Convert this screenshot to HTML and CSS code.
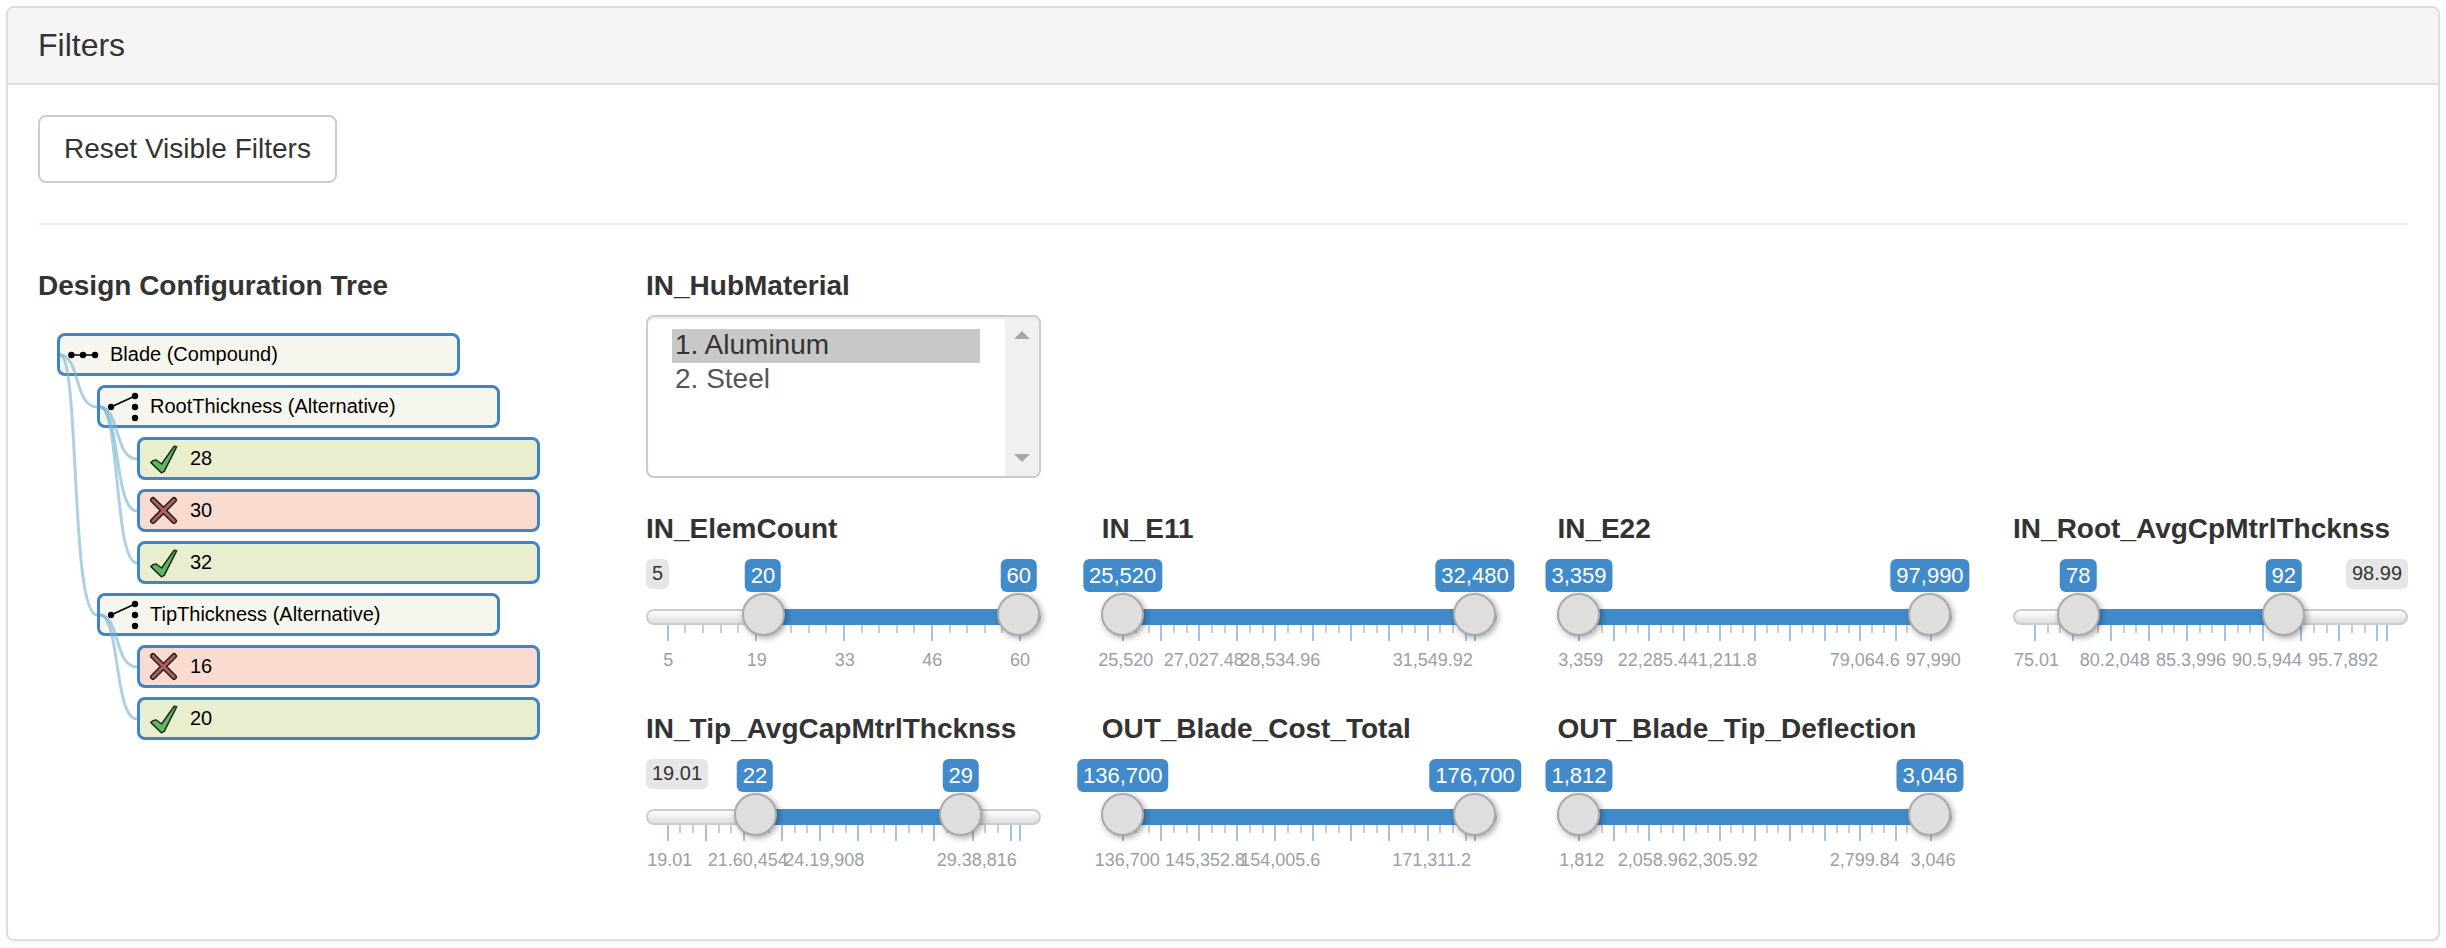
FILE: index.html
```html
<!DOCTYPE html>
<html>
<head>
    <title>Filters</title>
    <link rel="stylesheet" href="styles.css">
</head>
<body>

    <div class="panel">
        <div class="panel-heading">
            <h3 class="panel-title">Filters</h3>
        </div>
        <div class="panel-body">
            <button class="btn-reset">Reset Visible Filters</button>
            <hr class="divider">

            <div class="filters-row">
                <div class="tree-col">
                    <h4 class="filter-title">Design Configuration Tree</h4>
                    <div class="tree">
                        <div class="node">
                            <svg class="node-icon" viewBox="0 0 32 32"><path class="icon-line" d="M3 16H27"/><circle cx="3.4" cy="16" r="3.2"/><circle cx="15" cy="16" r="3.2"/><circle cx="27" cy="16" r="3.2"/></svg>
                            <span>Blade (Compound)</span>
                        </div>
                        <div class="node level-1">
                            <svg class="node-icon" viewBox="0 0 32 32"><path class="icon-line" d="M3 16L27 5"/><circle cx="3" cy="16" r="3.2"/><circle cx="27" cy="5" r="3.2"/><circle cx="27" cy="16" r="3.2"/><circle cx="27" cy="27" r="3.2"/></svg>
                            <span>RootThickness (Alternative)</span>
                        </div>
                        <div class="node level-2 node-ok">
                            <svg class="node-icon" viewBox="0 0 32 32"><path class="icon-check" d="M2.7 19.4Q5 16.8 8.3 17L13.6 21L26.2 3.2L28.6 3.8L16.2 28.4L13.4 29.8Z"/></svg>
                            <span>28</span>
                        </div>
                        <div class="node level-2 node-no">
                            <svg class="node-icon" viewBox="0 0 32 32"><path class="icon-x-out" d="M5 5L26 26M26 5L5 26"/><path class="icon-x-in" d="M5 5L26 26M26 5L5 26"/></svg>
                            <span>30</span>
                        </div>
                        <div class="node level-2 node-ok">
                            <svg class="node-icon" viewBox="0 0 32 32"><path class="icon-check" d="M2.7 19.4Q5 16.8 8.3 17L13.6 21L26.2 3.2L28.6 3.8L16.2 28.4L13.4 29.8Z"/></svg>
                            <span>32</span>
                        </div>
                        <div class="node level-1">
                            <svg class="node-icon" viewBox="0 0 32 32"><path class="icon-line" d="M3 16L27 5"/><circle cx="3" cy="16" r="3.2"/><circle cx="27" cy="5" r="3.2"/><circle cx="27" cy="16" r="3.2"/><circle cx="27" cy="27" r="3.2"/></svg>
                            <span>TipThickness (Alternative)</span>
                        </div>
                        <div class="node level-2 node-no">
                            <svg class="node-icon" viewBox="0 0 32 32"><path class="icon-x-out" d="M5 5L26 26M26 5L5 26"/><path class="icon-x-in" d="M5 5L26 26M26 5L5 26"/></svg>
                            <span>16</span>
                        </div>
                        <div class="node level-2 node-ok">
                            <svg class="node-icon" viewBox="0 0 32 32"><path class="icon-check" d="M2.7 19.4Q5 16.8 8.3 17L13.6 21L26.2 3.2L28.6 3.8L16.2 28.4L13.4 29.8Z"/></svg>
                            <span>20</span>
                        </div>

                        <svg class="links" viewBox="38 333 140 420">
                            <path d="M60 355C80 355 74 407 97 407"/>
                            <path d="M60 355C80 355 70 615 97 615"/>
                            <path d="M100 407C120 407 114 459 137 459"/>
                            <path d="M100 407C120 407 114 511 137 511"/>
                            <path d="M100 407C120 407 114 563 137 563"/>
                            <path d="M100 615C120 615 114 667 137 667"/>
                            <path d="M100 615C120 615 114 719 137 719"/>
                        </svg>
                    </div>
                </div>

                <div class="filters-col">
                    <h4 class="filter-title">IN_HubMaterial</h4>
                    <div class="listbox">
                        <div class="listbox-options">
                            <div class="option option-selected">1. Aluminum</div>
                            <div class="option">2. Steel</div>
                        </div>
                        <div class="scrollbar">
                            <span class="arrow-up"></span>
                            <span class="arrow-down"></span>
                        </div>
                    </div>
                    <div class="sliders" id="sliders"></div>
                </div>
            </div>
        </div>
    </div>

    <script src="sliders.js"></script>
</body>
</html>
```

FILE: styles.css
```css
* {
    box-sizing: border-box;
}

body {
    font-family: "Liberation Sans", Arial, sans-serif;
    color: #333333;
    background-color: #ffffff;
    margin: 0;
    padding: 6px;
}

.panel {
    border: 2px solid #dddddd;
    border-radius: 8px;
    box-shadow: 0 2px 4px rgba(0, 0, 0, 0.05);
}

.panel-heading {
    background-color: #f5f5f5;
    border-bottom: 2px solid #dddddd;
    border-radius: 6px 6px 0 0;
    padding: 20px 30px;
}

.panel-title {
    margin: 0;
    font-size: 32px;
    font-weight: normal;
    line-height: 35px;
}

.panel-body {
    padding: 30px 30px 56px;
}

.btn-reset {
    display: block;
    height: 68px;
    padding: 0 24px;
    font-family: inherit;
    font-size: 28px;
    color: #333333;
    background-color: #ffffff;
    border: 2px solid #cccccc;
    border-radius: 8px;
}

.divider {
    height: 2px;
    margin: 40px 0 45px;
    border: none;
    background-color: #eeeeee;
}

.filters-row {
    display: flex;
}

.tree-col {
    width: 608px;
    flex: none;
}

.filters-col {
    flex: 1;
}

.filter-title {
    margin: 0;
    font-size: 28px;
    font-weight: bold;
    line-height: 31px;
    white-space: nowrap;
}

/* tree */
.tree {
    position: relative;
    margin: 32px 0 0 19px;
}

.node {
    display: flex;
    align-items: center;
    width: 403px;
    height: 43px;
    margin-bottom: 9px;
    padding-left: 8px;
    font-size: 20px;
    color: #000000;
    background-color: #f7f6ee;
    border: 3px solid #3d85c6;
    border-radius: 8px;
}

.level-1 {
    margin-left: 40px;
}

.level-2 {
    margin-left: 80px;
}

.node-ok {
    background-color: #e9eecf;
}

.node-no {
    background-color: #f9dbd0;
}

.node-icon {
    width: 32px;
    height: 32px;
    flex: none;
    margin-right: 10px;
}

.icon-line {
    stroke: #000000;
    stroke-width: 1.5;
    fill: none;
}

.icon-check {
    fill: #5fb760;
    stroke: #1c2a1c;
    stroke-width: 1.5;
    stroke-linejoin: round;
}

.icon-x-out {
    stroke: #2a1a1a;
    stroke-width: 6;
    stroke-linecap: round;
    fill: none;
}

.icon-x-in {
    stroke: #b0605c;
    stroke-width: 3;
    stroke-linecap: round;
    fill: none;
}

.links {
    position: absolute;
    left: 0;
    top: 0;
    width: 140px;
    height: 420px;
    margin-left: -19px;
    pointer-events: none;
}

.links path {
    fill: none;
    stroke: rgba(120, 180, 215, 0.62);
    stroke-width: 3;
}

/* list box */
.listbox {
    display: flex;
    width: 395px;
    height: 163px;
    margin: 14px 0 35px;
    border: 2px solid #cccccc;
    border-radius: 8px;
    box-shadow: inset 0 2px 2px rgba(0, 0, 0, 0.075);
    overflow: hidden;
}

.listbox-options {
    flex: 1;
    padding: 12px 25px 0 24px;
}

.option {
    height: 34px;
    padding-left: 3px;
    font-size: 28px;
    line-height: 32px;
    color: #555555;
}

.option-selected {
    background-color: #c8c8c8;
    color: #333333;
}

.scrollbar {
    display: flex;
    flex-direction: column;
    justify-content: space-between;
    align-items: center;
    width: 34px;
    padding: 14px 0;
    background-color: #f0f0f0;
}

.arrow-up {
    border: 8px solid transparent;
    border-top: none;
    border-bottom-color: #a6a6a6;
}

.arrow-down {
    border: 8px solid transparent;
    border-bottom: none;
    border-top-color: #a6a6a6;
}

/* range sliders */
.sliders {
    display: grid;
    grid-template-columns: repeat(4, 455.7px);
    row-gap: 30px;
}

.slider {
    position: relative;
    width: 395px;
    height: 124px;
    margin-top: 15px;
}

.track {
    position: absolute;
    left: 0;
    top: 50px;
    width: 100%;
    height: 16px;
    background: linear-gradient(to bottom, #ffffff, #dddddd);
    border: 2px solid #cccccc;
    border-radius: 8px;
}

.bar {
    position: absolute;
    top: 50px;
    height: 16px;
    background-color: #428bca;
}

.handle {
    position: absolute;
    top: 34px;
    width: 43px;
    height: 43px;
    margin-left: -21.5px;
    background-color: #dedede;
    border: 2px solid #aaaaaa;
    border-radius: 50%;
    box-shadow: 2px 2px 6px rgba(0, 0, 0, 0.35);
}

.badge {
    position: absolute;
    top: 0;
    height: 33px;
    padding: 0 6px;
    transform: translateX(-50%);
    font-size: 22px;
    line-height: 33px;
    color: #ffffff;
    background-color: #428bca;
    border-radius: 6px;
    white-space: nowrap;
}

.limit {
    position: absolute;
    top: 0;
    height: 30px;
    padding: 0 6px;
    font-size: 20px;
    line-height: 29px;
    color: #333333;
    background-color: #e6e6e6;
    border-radius: 6px;
}

.limit-max {
    right: 0;
}

.tick {
    position: absolute;
    top: 66px;
    width: 2px;
    height: 8px;
    margin-left: -1px;
    background-color: #cccccc;
}

.tick-major {
    height: 16px;
    background-color: #a0c5e4;
}

.tick-label {
    position: absolute;
    top: 91px;
    transform: translateX(-50%);
    font-size: 18px;
    line-height: 20px;
    color: #98a0aa;
    white-space: nowrap;
}
```

FILE: sliders.js
```js
// positions are px from the left edge of the 395px slider box
var sliders = [
    { title: 'IN_ElemCount', min: '5', from: [117, '20'], to: [372.8, '60'],
      start: 21.7, step: 88.1, steps: 4, minor: 4,
      labels: [['5', 22.3], ['19', 110.7], ['33', 198.7], ['46', 286.3], ['60', 374]] },
    { title: 'IN_E11', from: [21, '25,520'], to: [373.3, '32,480'],
      start: 21.6, step: 38.03, steps: 9, minor: 2, end: 373.3,
      labels: [['25,520', 24], ['27,027.48', 102], ['28,534.96', 178.6], ['31,549.92', 331]] },
    { title: 'IN_E22', from: [21.6, '3,359'], to: [372.6, '97,990'],
      start: 21.6, step: 35.17, steps: 10, minor: 2,
      labels: [['3,359', 23.4], ['22,285.4', 95.5], ['41,211.8', 165], ['79,064.6', 307.3], ['97,990', 375.9]] },
    { title: 'IN_Root_AvgCpMtrlThcknss', max: '98.99', from: [65.2, '78'], to: [270.6, '92'],
      start: 21.9, step: 38.03, steps: 9, minor: 2, end: 373.6,
      labels: [['75.01', 23.4], ['80.2,048', 101.7], ['85.3,996', 177.9], ['90.5,944', 253.9], ['95.7,892', 330]] },
    { title: 'IN_Tip_AvgCapMtrlThcknss', min: '19.01', from: [109, '22'], to: [314.7, '29'],
      start: 21.7, step: 38.1, steps: 9, minor: 2, end: 374,
      labels: [['19.01', 23.7], ['21.60,454', 101.8], ['24.19,908', 178.2], ['29.38,816', 330.7]] },
    { title: 'OUT_Blade_Cost_Total', from: [21, '136,700'], to: [373.3, '176,700'],
      start: 21.6, step: 38.03, steps: 9, minor: 2, end: 373.3,
      labels: [['136,700', 25.6], ['145,352.8', 103.3], ['154,005.6', 178.6], ['171,311.2', 330]] },
    { title: 'OUT_Blade_Tip_Deflection', from: [21.6, '1,812'], to: [372.6, '3,046'],
      start: 21.6, step: 35.17, steps: 10, minor: 2,
      labels: [['1,812', 24.3], ['2,058.96', 95.3], ['2,305.92', 165.3], ['2,799.84', 307.3], ['3,046', 375.6]] }
];

function add(parent, className, text, left) {
    var el = document.createElement('div');
    el.className = className;
    if (text) el.textContent = text;
    if (left !== undefined) el.style.left = left + 'px';
    parent.appendChild(el);
    return el;
}

var holder = document.getElementById('sliders');

sliders.forEach(function (s) {
    var cell = add(holder, 'slider-cell');
    add(cell, 'filter-title', s.title);
    var box = add(cell, 'slider');

    // grey track only shows where the range doesn't reach the ends
    add(box, 'track');
    if (s.min) add(box, 'limit', s.min, 0);
    if (s.max) add(box, 'limit limit-max', s.max);

    for (var i = 0; i <= s.steps; i++) {
        var x = s.start + i * s.step;
        add(box, 'tick tick-major', '', x);
        if (i < s.steps) {
            for (var j = 1; j <= s.minor; j++) {
                add(box, 'tick', '', x + j * s.step / (s.minor + 1));
            }
        }
    }
    if (s.end) add(box, 'tick tick-major', '', s.end);

    s.labels.forEach(function (l) {
        add(box, 'tick-label', l[0], l[1]);
    });

    var bar = add(box, 'bar', '', s.from[0]);
    bar.style.width = (s.to[0] - s.from[0]) + 'px';

    add(box, 'handle', '', s.from[0]);
    add(box, 'handle', '', s.to[0]);
    add(box, 'badge', s.from[1], s.from[0]);
    add(box, 'badge', s.to[1], s.to[0]);
});
```
